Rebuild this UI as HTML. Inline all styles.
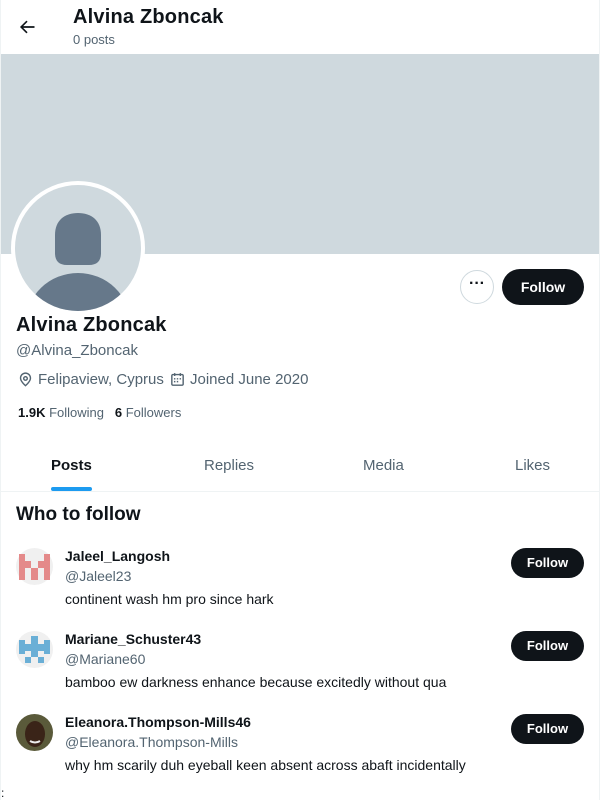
<!DOCTYPE html>
<html><head><style>
*{box-sizing:border-box;margin:0;padding:0}
body{width:600px;height:800px;background:#fff;font-family:"Liberation Sans",sans-serif;color:#0f1419;position:relative;overflow:hidden}
.abs{position:absolute}
.wrap{position:absolute;left:0;top:0;width:600px;height:800px;border-left:1px solid #eff3f4;border-right:1px solid #eff3f4}
.btn{position:absolute;background:#0f1419;color:#fff;font-weight:bold;border-radius:18px;text-align:center}
.name{font-weight:bold;font-size:15px}
.grey{color:#536471}
.tab{position:absolute;top:457px;font-size:15px;color:#536471}
</style></head><body>
<div class="wrap"></div>
<svg class="abs" style="left:17px;top:17px" width="20" height="20" viewBox="0 0 24 24"><path d="M7.41 13l5.3 5.29-1.42 1.42L3.59 12l7.7-7.71 1.42 1.42L7.41 11H21v2H7.41z" fill="#0f1419"/></svg>
<div class="abs" style="left:73px;top:6px;font-size:20px;font-weight:bold;letter-spacing:0.2px">Alvina Zboncak</div>
<div class="abs grey" style="left:73px;top:32px;font-size:13px">0 posts</div>
<div class="abs" style="left:1px;top:54px;width:598px;height:200px;background:#cfd9de"></div>
<div class="abs" style="left:11px;top:181px;width:134px;height:134px;border-radius:50%;background:#fff"></div>
<svg class="abs" style="left:15px;top:185px" width="126" height="126" viewBox="0 0 126 126">
<defs><clipPath id="c"><circle cx="63" cy="63" r="63"/></clipPath></defs>
<circle cx="63" cy="63" r="63" fill="#cfd9de"/>
<g clip-path="url(#c)" fill="#66788a">
<path d="M40 50C40 35 50 28 63 28S86 35 86 50V68C86 76 82 80 74 80H52C44 80 40 76 40 68Z"/>
<ellipse cx="63" cy="138" rx="52" ry="50"/>
</g></svg>
<div class="abs" style="left:460px;top:270px;width:34px;height:34px;border:1px solid #cfd9de;border-radius:50%;text-align:center;font-weight:bold;font-size:16px;line-height:26px">&middot;&middot;&middot;</div>
<div class="btn" style="left:502px;top:269px;width:82px;height:36px;line-height:36px;font-size:14px">Follow</div>
<div class="abs" style="left:16px;top:314px;font-size:20px;font-weight:bold;letter-spacing:0.2px">Alvina Zboncak</div>
<div class="abs grey" style="left:16px;top:342px;font-size:15px">@Alvina_Zboncak</div>
<svg class="abs" style="left:17px;top:371px" width="17" height="17" viewBox="0 0 24 24"><path fill="#536471" d="M12 7c-1.93 0-3.5 1.57-3.5 3.5S10.07 14 12 14s3.5-1.570 3.5-3.5S13.930 7 12 7zm0 5c-.83 0-1.5-.67-1.5-1.5S11.17 9 12 9s1.5.67 1.5 1.5S12.83 12 12 12zm0-10c-4.42 0-8 3.58-8 8 0 5.2 7.2 11.3 7.5 11.6l.5.4.5-.4C12.8 21.3 20 15.2 20 10c0-4.42-3.58-8-8-8zm0 17.35C10.3 17.8 6 13.5 6 10c0-3.31 2.69-6 6-6s6 2.69 6 6c0 3.5-4.3 7.8-6 9.35z"/></svg>
<div class="abs grey" style="left:38px;top:371px;font-size:15px">Felipaview, Cyprus</div>
<svg class="abs" style="left:169px;top:371px" width="17" height="17" viewBox="0 0 24 24"><path fill="#536471" d="M7 4V3h2v1h6V3h2v1h1.5C19.89 4 21 5.12 21 6.5v12c0 1.38-1.11 2.5-2.5 2.5h-13C4.12 21 3 19.88 3 18.5v-12C3 5.120 4.12 4 5.5 4H7zm0 2H5.5c-.27 0-.5.22-.5.5v12c0 .28.23.5.5.5h13c.28 0 .5-.22.5-.5v-12c0-.28-.22-.5-.5-.5H17v1h-2V6H9v1H7V6zm0 6h2v-2H7v2zm0 4h2v-2H7v2zm4-4h2v-2h-2v2zm0 4h2v-2h-2v2zm4-4h2v-2h-2v2z"/></svg>
<div class="abs grey" style="left:190px;top:371px;font-size:15px">Joined June 2020</div>
<div class="abs" style="left:18px;top:405px;font-size:13px"><b>1.9K</b> <span class="grey">Following</span>&nbsp;&nbsp; <b>6</b> <span class="grey">Followers</span></div>
<div class="tab" style="left:51px;color:#0f1419;font-weight:bold">Posts</div>
<div class="abs" style="left:51px;top:487px;width:41px;height:4px;border-radius:2px;background:#1d9bf0"></div>
<div class="tab" style="left:204px">Replies</div>
<div class="tab" style="left:363px">Media</div>
<div class="tab" style="left:515px">Likes</div>
<div class="abs" style="left:1px;top:491px;width:598px;height:1px;background:#eff3f4"></div>
<div class="abs" style="left:16px;top:504px;font-size:19px;font-weight:bold">Who to follow</div>

<svg class="abs" style="left:16px;top:548px" width="37" height="37" viewBox="0 0 37 37"><circle cx="18.5" cy="18.5" r="18.5" fill="#f0f0f0"/><g fill="#e48a8a"><rect x="3" y="6" width="6" height="26"/><rect x="28" y="6" width="6" height="26"/><rect x="9" y="13" width="6" height="7"/><rect x="22" y="13" width="6" height="7"/><rect x="15" y="20" width="7" height="12"/></g></svg>
<div class="abs name" style="left:65px;top:548px;font-size:14px">Jaleel_Langosh</div>
<div class="abs grey" style="left:65px;top:568px;font-size:14px">@Jaleel23</div>
<div class="abs" style="left:65px;top:591px;font-size:14px">continent wash hm pro since hark</div>
<div class="btn" style="left:511px;top:548px;width:73px;height:30px;line-height:30px;font-size:13px">Follow</div>

<svg class="abs" style="left:16px;top:631px" width="37" height="37" viewBox="0 0 37 37"><circle cx="18.5" cy="18.5" r="18.5" fill="#f0f0f0"/><g fill="#6aafd6"><rect x="3" y="9" width="6" height="14"/><rect x="28" y="9" width="6" height="14"/><rect x="15" y="5" width="7" height="8"/><rect x="9" y="13" width="19" height="7"/><rect x="9" y="26" width="6" height="6"/><rect x="22" y="26" width="6" height="6"/><rect x="15" y="20" width="7" height="6"/></g></svg>
<div class="abs name" style="left:65px;top:631px;font-size:14px">Mariane_Schuster43</div>
<div class="abs grey" style="left:65px;top:651px;font-size:14px">@Mariane60</div>
<div class="abs" style="left:65px;top:674px;font-size:14px">bamboo ew darkness enhance because excitedly without qua</div>
<div class="btn" style="left:511px;top:631px;width:73px;height:30px;line-height:30px;font-size:13px">Follow</div>

<svg class="abs" style="left:16px;top:714px" width="37" height="37" viewBox="0 0 37 37"><circle cx="18.5" cy="18.5" r="18.5" fill="#5a5a3a"/><ellipse cx="19" cy="20" rx="10" ry="13" fill="#3a2418"/><path d="M14 27q5 3 10 0" stroke="#eee" stroke-width="2" fill="none"/></svg>
<div class="abs name" style="left:65px;top:714px;font-size:14px">Eleanora.Thompson-Mills46</div>
<div class="abs grey" style="left:65px;top:734px;font-size:14px">@Eleanora.Thompson-Mills</div>
<div class="abs" style="left:65px;top:757px;font-size:14px">why hm scarily duh eyeball keen absent across abaft incidentally</div>
<div class="btn" style="left:511px;top:714px;width:73px;height:30px;line-height:30px;font-size:13px">Follow</div>
<div class="abs" style="left:1px;top:786px;font-size:12px">:</div>
</body></html>
